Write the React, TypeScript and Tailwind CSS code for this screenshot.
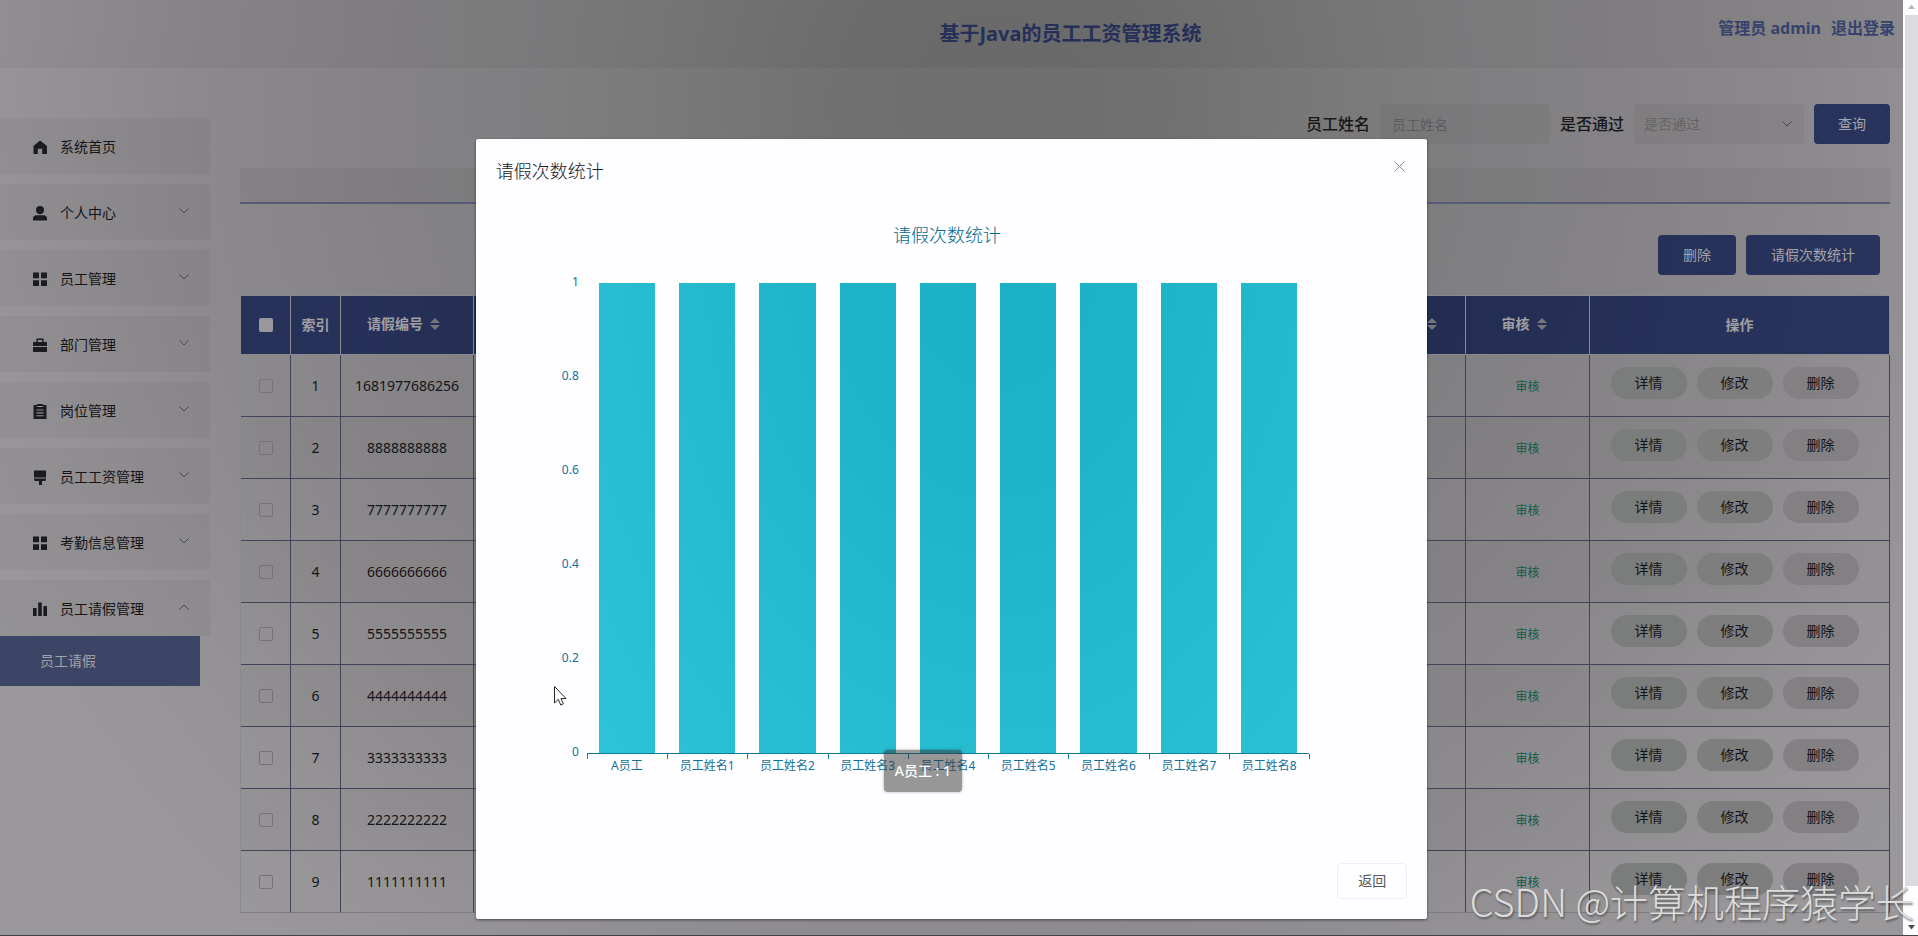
import React from "react";

type IconName = "home" | "user" | "menu" | "case" | "order" | "platform" | "data";

const menu: { label: string; icon: IconName; open?: boolean; leaf?: boolean }[] = [
  { label: "系统首页", icon: "home", leaf: true },
  { label: "个人中心", icon: "user" },
  { label: "员工管理", icon: "menu" },
  { label: "部门管理", icon: "case" },
  { label: "岗位管理", icon: "order" },
  { label: "员工工资管理", icon: "platform" },
  { label: "考勤信息管理", icon: "menu" },
  { label: "员工请假管理", icon: "data", open: true },
];

const rows = [
  "1681977686256",
  "8888888888",
  "7777777777",
  "6666666666",
  "5555555555",
  "4444444444",
  "3333333333",
  "2222222222",
  "1111111111",
];

const bars = [
  { name: "A员工", value: 1 },
  { name: "员工姓名1", value: 1 },
  { name: "员工姓名2", value: 1 },
  { name: "员工姓名3", value: 1 },
  { name: "员工姓名4", value: 1 },
  { name: "员工姓名5", value: 1 },
  { name: "员工姓名6", value: 1 },
  { name: "员工姓名7", value: 1 },
  { name: "员工姓名8", value: 1 },
];

const iconPaths: Record<IconName, string> = {
  home: "M7 0.5 L14 6 V14 H9.2 V8.7 H4.8 V14 H0.5 V6 Z",
  user: "M7 0 a4 4.1 0 0 1 0 8.2 a4 4.1 0 0 1 0 -8.2 Z M0 14.5 V12.5 Q0 9.5 3.5 9.3 H10.5 Q14 9.5 14 12.5 V14.5 Z",
  menu: "M0 0.5 H6 V6.3 H0 Z M8 0.5 H14 V6.3 H8 Z M0 8.3 H6 V14 H0 Z M8 8.3 H14 V14 H8 Z",
  case: "M3.4 0.5 H10.6 V4 H14 V8 H0 V4 H3.4 Z M4.8 1.9 V4 H9.2 V1.9 Z M0 9 H14 V14 H0 Z",
  order: "M1 1 H4 V0 H10 V1 H13.5 V15 H0.5 V1 Z M4 2 V3 H10 V2 Z M3.5 5.4 V6.5 H10.5 V5.4 Z M3.5 8.3 V9.4 H10.5 V8.3 Z M3.5 11.2 V12.3 H10.5 V11.2 Z",
  platform: "M1 0.5 H13 V7.5 H1 Z M1 8.5 H13 V10 L12 11 H9 V15 H6 V11 H2 L1 10 Z",
  data: "M0 6 H3.6 V14 H0 Z M5.2 0.5 H8.8 V14 H5.2 Z M10.4 4 H14 V14 H10.4 Z",
};

function MenuIcon({ name }: { name: IconName }) {
  return (
    <svg width="14" height="15" viewBox="0 0 14 15" fill="#1c1b1e" fillRule="evenodd" aria-hidden="true">
      <path d={iconPaths[name]} />
    </svg>
  );
}

function Chevron({ up = false }: { up?: boolean }) {
  return (
    <svg width="12" height="8" viewBox="0 0 12 8" fill="none" stroke="#4a494c" strokeWidth="1" aria-hidden="true">
      <path d={up ? "M1.5 6.5 L6 2 L10.5 6.5" : "M1.5 1.5 L6 6 L10.5 1.5"} />
    </svg>
  );
}

function Sorter() {
  return (
    <svg width="10" height="12" viewBox="0 0 10 12" fill="#77767c" aria-hidden="true">
      <path d="M5 0 L10 5 H0 Z M0 7 H10 L5 12 Z" />
    </svg>
  );
}

const headCell =
  "h-[59px] border-r border-b border-[#8a898f] p-0 text-sm font-bold text-[#a09fa4]";
const sortLabel = "flex items-center justify-center gap-[7px] pr-[7px] pb-[2px]";
const bodyCell = "h-[62px] border-r border-b border-[#42435a] p-0 text-center";
const navyFill =
  "bg-[radial-gradient(circle_at_1000px_150px,#222b50_0px,#232d53_450px,#2a355f_950px)] bg-fixed";
const primaryButton = "h-10 rounded text-sm text-[#a5a4a9] " + navyFill;

function Sidebar() {
  return (
    <nav className="w-60 shrink-0 pt-[50px]">
      <ul className="flex w-[210px] flex-col gap-[10px]">
        {menu.map((item) => (
          <li key={item.label}>
            <button
              type="button"
              className="flex h-14 w-full items-center gap-[13px] bg-black/4 pt-[2px] pr-5 pl-[33px] text-left text-sm text-[#151417]"
            >
              <MenuIcon name={item.icon} />
              <span className="flex-1">{item.label}</span>
              {!item.leaf && (
                <span className="pb-1">
                  <Chevron up={item.open} />
                </span>
              )}
            </button>
            {item.open && (
              <a
                href="#leave"
                className="flex h-[50px] w-[200px] items-center bg-[#3d4566] pl-10 text-sm text-[#a3a1a6]"
              >
                员工请假
              </a>
            )}
          </li>
        ))}
      </ul>
    </nav>
  );
}

function SearchBar() {
  return (
    <form className="flex items-center justify-end gap-[10px]">
      <label htmlFor="name" className="text-base font-medium text-[#17161a]">
        员工姓名
      </label>
      <input
        id="name"
        type="text"
        placeholder="员工姓名"
        className="h-10 w-[170px] rounded bg-black/4 px-3 text-sm placeholder:text-[#5c5b5e]"
      />
      <label htmlFor="passed" className="text-base font-medium text-[#17161a]">
        是否通过
      </label>
      <div className="relative w-[170px]">
        <select
          id="passed"
          className="h-10 w-full appearance-none rounded bg-black/4 px-[10px] text-sm text-[#646366]"
        >
          <option>是否通过</option>
        </select>
        <span className="pointer-events-none absolute inset-y-0 right-[11px] flex items-center">
          <Chevron />
        </span>
      </div>
      <button type="button" className={primaryButton + " w-[76px]"}>
        查询
      </button>
    </form>
  );
}

function LeaveTable() {
  return (
    <table className="w-full table-fixed border-separate border-spacing-0 border-t border-l border-[#8a898f]">
      <colgroup>
        <col className="w-[50px]" />
        <col className="w-[50px]" />
        <col className="w-[133px]" />
        <col />
        <col className="w-[124px]" />
        <col className="w-[124px]" />
        <col className="w-[300px]" />
      </colgroup>
      <thead className={navyFill}>
        <tr>
          <th className={headCell}>
            <input
              type="checkbox"
              aria-label="全选"
              className="mx-auto block size-[14px] appearance-none rounded-xs bg-[#9a989d]"
            />
          </th>
          <th className={headCell}>索引</th>
          <th className={headCell}>
            <span className={sortLabel}>
              请假编号 <Sorter />
            </span>
          </th>
          <th className={headCell} />
          <th className={headCell}>
            <span className={sortLabel}>
              是否通过 <Sorter />
            </span>
          </th>
          <th className={headCell}>
            <span className={sortLabel}>
              审核 <Sorter />
            </span>
          </th>
          <th className={headCell}>操作</th>
        </tr>
      </thead>
      <tbody className="text-sm text-[#151417]">
        {rows.map((id, i) => (
          <tr key={id} className="even:bg-black/2 last:[&>td]:border-b-[#7e7c80]">
            <td className={bodyCell}>
              <input
                type="checkbox"
                aria-label={"选择 " + id}
                className="mx-auto block size-[14px] appearance-none rounded-xs border border-[#757377]"
              />
            </td>
            <td className={bodyCell}>{i + 1}</td>
            <td className={bodyCell}>{id}</td>
            <td className={bodyCell} />
            <td className={bodyCell} />
            <td className={bodyCell}>
              <button type="button" className="text-xs text-[#105a47]">
                审核
              </button>
            </td>
            <td className={bodyCell}>
              <div className="flex justify-center gap-[10px] pr-[10px] pb-[5px]">
                <button type="button" className="h-8 w-[76px] rounded-full bg-[#7b7c7c]">
                  详情
                </button>
                <button type="button" className="h-8 w-[76px] rounded-full bg-[#7e7e7f]">
                  修改
                </button>
                <button type="button" className="h-8 w-[76px] rounded-full bg-[#828083]">
                  删除
                </button>
              </div>
            </td>
          </tr>
        ))}
      </tbody>
    </table>
  );
}

function BarChart() {
  return (
    <div className="relative flex items-start pr-[97px] text-xs text-[#10719b]">
      <div className="-mt-[7px] flex h-[482px] w-[91px] flex-col justify-between pr-2 text-right leading-3">
        <span>1</span>
        <span>0.8</span>
        <span>0.6</span>
        <span>0.4</span>
        <span>0.2</span>
        <span>0</span>
      </div>
      <div className="flex-1">
        <div className="grid h-[471px] grid-cols-9 border-b border-[#127a9c]">
          {bars.map((b) => (
            <div key={b.name} className="flex items-end justify-center">
              <div
                className="w-[70%] bg-[radial-gradient(ellipse_550px_800px_at_1000px_240px,#1cb0c4_0%,#1fb3c8_30%,#2ec4d7_100%)] bg-fixed"
                style={{ height: `${b.value * 100}%` }}
              />
            </div>
          ))}
        </div>
        <div className="grid grid-cols-9">
          {bars.map((b) => (
            <div key={b.name} className="text-center leading-[14px] whitespace-nowrap">
              <div className="h-[5px] border-l border-[#127a9c]" />
              {b.name}
            </div>
          ))}
        </div>
      </div>
      <div className="w-px pt-[471px]">
        <div className="h-[5px] bg-[#127a9c]" />
      </div>
      <div className="absolute top-[467px] left-[388px] rounded bg-[#323232]/50 px-[11px] py-[10px] text-sm leading-[22px] font-medium whitespace-nowrap text-white shadow-[0_0_3px_rgba(0,0,0,0.35)]">
        A员工 : 1
      </div>
    </div>
  );
}

function StatsDialog() {
  return (
    <div
      role="dialog"
      aria-label="请假次数统计"
      className="relative w-1/2 rounded-xs bg-[#fefdff] px-5 pt-5 pb-5 shadow-[0_1px_3px_rgba(0,0,0,0.5)]"
    >
      <div className="flex items-start justify-between">
        <h2 className="text-lg leading-6 font-light text-[#202023]">请假次数统计</h2>
        <button type="button" aria-label="关闭" className="mt-[2px] mr-[2px]">
          <svg width="11" height="11" viewBox="0 0 11 11" stroke="#8c8b90" strokeWidth="1">
            <path d="M0.5 0.5 L10.5 10.5 M10.5 0.5 L0.5 10.5" />
          </svg>
        </button>
      </div>
      <h3 className="mt-10 mb-9 pr-[9px] text-center text-lg leading-6 font-light text-[#006a92]">
        请假次数统计
      </h3>
      <BarChart />
      <div className="mt-[90px] flex justify-end">
        <button
          type="button"
          className="h-9 w-[70px] rounded border border-[#f0eff1] text-sm text-[#58575b]"
        >
          返回
        </button>
      </div>
      <svg className="absolute top-[547px] left-[78px]" width="13" height="20" viewBox="0 0 13 20" aria-hidden="true">
        <path
          d="M0.5 0.5 V17 L4.3 13.4 L6.8 19 L9.4 17.9 L7 12.5 H12 Z"
          fill="#ffffff"
          stroke="#2a292c"
          strokeWidth="1"
        />
      </svg>
    </div>
  );
}

export default function App() {
  return (
    <div className="relative flex h-screen overflow-hidden border-b border-[#42434f] font-['Noto_Sans','Noto_Sans_CJK_SC',sans-serif]">
      <div className="relative flex-1 bg-[radial-gradient(circle_at_1000px_100px,#6e6e6e_0px,#707070_150px,#7b7a7b_350px,#848285_600px,#8b898c_800px,#969497_1000px,#9a989b_1150px)]">
        <header className="grid h-[68px] bg-black/4 font-bold">
          <h1 className="col-start-1 row-start-1 self-center justify-self-center pl-[238px] text-xl text-[#252f58]">
            基于Java的员工工资管理系统
          </h1>
          <div className="col-start-1 row-start-1 flex gap-[10px] justify-self-end pt-4 pr-2 text-base text-[#36436d]">
            <span>管理员 admin</span>
            <a href="#logout">退出登录</a>
          </div>
        </header>
        <div className="flex">
          <Sidebar />
          <main className="min-w-0 flex-1 pt-9 pr-[13px]">
            <SearchBar />
            <div className="mt-6 h-9 border-b-2 border-[#545b74] bg-black/4" />
            <div className="mt-[31px] mb-5 flex justify-end gap-[10px] pr-[10px]">
              <button type="button" className={primaryButton + " w-[78px]"}>
                删除
              </button>
              <button type="button" className={primaryButton + " w-[134px]"}>
                请假次数统计
              </button>
            </div>
            <LeaveTable />
          </main>
        </div>
        <div className="absolute inset-0 flex items-start justify-center pt-[139px]">
          <StatsDialog />
        </div>
      </div>
      <div className="flex w-[15px] shrink-0 flex-col bg-[#fdfcfe] pl-[2px]">
        <svg width="13" height="15" viewBox="0 0 13 15" fill="#b9b8bb" aria-hidden="true">
          <path d="M6.5 4.5 L10 9 H3 Z" />
        </svg>
        <div className="flex-1 bg-[#dddbde]" />
        <svg className="mt-[34px]" width="13" height="15" viewBox="0 0 13 15" fill="#4b4a4d" aria-hidden="true">
          <path d="M3 5 H10 L6.5 9.5 Z" />
        </svg>
      </div>
      <div className="pointer-events-none absolute right-1 bottom-[6px] font-['Noto_Sans_CJK_SC',sans-serif] text-[38px] leading-[56px] font-light whitespace-nowrap text-[#dcdcdc] [text-shadow:1px_2px_2px_rgba(60,60,60,0.6)]">
        CSDN @计算机程序猿学长
      </div>
    </div>
  );
}
